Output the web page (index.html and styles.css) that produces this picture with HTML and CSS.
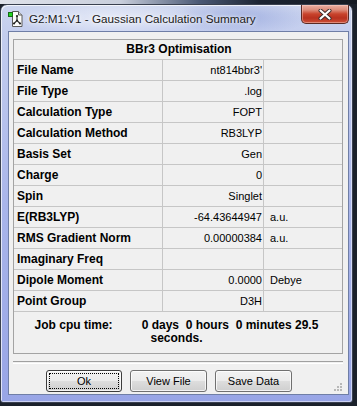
FILE: index.html
```html
<!DOCTYPE html>
<html>
<head>
<meta charset="utf-8">
<link rel="stylesheet" href="styles.css">
</head>
<body>
<div class="desktop">
  <div class="window">
    <div class="titlebar">
      <svg class="app-icon" width="16" height="16" viewBox="0 0 16 16">
        <path d="M4.5 0.5h6l3.5 3.5v11.5h-9.5z" fill="#fdfdfd" stroke="#5a5a5a"/>
        <path d="M10.5 0.5v3.5h3.5" fill="#d8d8d8" stroke="#5a5a5a"/>
        <path d="M9 5v4.5M9 9.5l-3 3M9 9.5l3 3" stroke="#333" stroke-width="1.2" fill="none"/>
        <circle cx="9" cy="5" r="1.1" fill="#222"/>
        <circle cx="9" cy="9.5" r="1.1" fill="#222"/>
        <circle cx="6" cy="12.5" r="1.1" fill="#222"/>
        <circle cx="12" cy="12.5" r="1.1" fill="#222"/>
        <rect x="0.5" y="1.5" width="4" height="4" fill="#22d622" stroke="#176b17"/>
      </svg>
      <span class="title">G2:M1:V1 - Gaussian Calculation Summary</span>
      <div class="close">
        <svg width="14" height="11" viewBox="0 0 14 11">
          <path d="M2.5 1.5l9 8M11.5 1.5l-9 8" stroke="#3b2a2a" stroke-width="4" stroke-linecap="round"/>
          <path d="M2.5 1.5l9 8M11.5 1.5l-9 8" stroke="#ffffff" stroke-width="2.2" stroke-linecap="round"/>
        </svg>
      </div>
    </div>
    <div class="client">
      <div class="panel">
        <div class="grid">
          <div class="cell head">BBr3 Optimisation</div>

          <div class="cell lbl">File Name</div><div class="cell val">nt814bbr3'</div><div class="cell unit"></div>
          <div class="cell lbl">File Type</div><div class="cell val">.log</div><div class="cell unit"></div>
          <div class="cell lbl">Calculation Type</div><div class="cell val">FOPT</div><div class="cell unit"></div>
          <div class="cell lbl">Calculation Method</div><div class="cell val">RB3LYP</div><div class="cell unit"></div>
          <div class="cell lbl">Basis Set</div><div class="cell val">Gen</div><div class="cell unit"></div>
          <div class="cell lbl">Charge</div><div class="cell val">0</div><div class="cell unit"></div>
          <div class="cell lbl">Spin</div><div class="cell val">Singlet</div><div class="cell unit"></div>
          <div class="cell lbl">E(RB3LYP)</div><div class="cell val">-64.43644947</div><div class="cell unit">a.u.</div>
          <div class="cell lbl">RMS Gradient Norm</div><div class="cell val">0.00000384</div><div class="cell unit">a.u.</div>
          <div class="cell lbl">Imaginary Freq</div><div class="cell val"></div><div class="cell unit"></div>
          <div class="cell lbl">Dipole Moment</div><div class="cell val">0.0000</div><div class="cell unit">Debye</div>
          <div class="cell lbl">Point Group</div><div class="cell val">D3H</div><div class="cell unit"></div>
        </div>
        <div class="cpu">
          <div class="cpu-line"><span class="cpu-label">Job cpu time:</span><span>0 days&nbsp; 0 hours&nbsp; 0 minutes 29.5</span></div>
          <div class="cpu-line">seconds.</div>
        </div>
      </div>
      <div class="sep"></div>
      <div class="buttons">
        <button class="btn default"><span class="focus">Ok</span></button>
        <button class="btn">View File</button>
        <button class="btn">Save Data</button>
        <svg class="grip" width="10" height="10" viewBox="0 0 10 10">
          <g fill="#b8b8b8">
            <rect x="7" y="1" width="2" height="2"/>
            <rect x="4" y="4" width="2" height="2"/><rect x="7" y="4" width="2" height="2"/>
            <rect x="1" y="7" width="2" height="2"/><rect x="4" y="7" width="2" height="2"/><rect x="7" y="7" width="2" height="2"/>
          </g>
        </svg>
      </div>
    </div>
  </div>
</div>
</body>
</html>
```
FILE: styles.css
```css
html, body {
  margin: 0;
  padding: 0;
}
body {
  width: 357px;
  height: 406px;
  overflow: hidden;
  background: #1b212b;
}
.desktop {
  width: 357px;
  height: 406px;
  padding-top: 4px;
  box-sizing: border-box;
  background:
    linear-gradient(90deg, #dfe2ea 0px, #c9cfdc 120px, #4a5874 200px, #1c2432 260px, #151a22 357px);
  background-size: 357px 4px;
  background-repeat: no-repeat;
}
.window {
  width: 353px;
  height: 399px;
  box-sizing: border-box;
  border: 1px solid #3a4150;
  border-radius: 7px 7px 3px 3px;
  padding: 0 3px 7px 7px;
  display: flex;
  flex-direction: column;
  background:
    radial-gradient(ellipse 90px 20px at 110px 14px, rgba(255,255,255,0.55), rgba(255,255,255,0) 100%),
    radial-gradient(ellipse 70px 18px at 240px 12px, rgba(120,140,210,0.45), rgba(120,140,210,0) 100%),
    linear-gradient(180deg, #cdd6ef 0px, #c3cdee 30px, #a9b5ea 200px, #98a5e6 399px);
  box-shadow: inset 1px 1px 0 rgba(255,255,255,0.7), inset -1px -1px 0 rgba(255,255,255,0.5);
}
.titlebar {
  height: 26px;
  flex: none;
  display: flex;
  align-items: flex-start;
}
.app-icon {
  margin-top: 6px;
  flex: none;
}
.title {
  margin-left: 5px;
  margin-top: 6px;
  font-family: "Liberation Sans", Arial, sans-serif;
  font-size: 11.7px;
  line-height: 15px;
  color: #1a1a1a;
  text-shadow: 0 0 6px rgba(255,255,255,0.95), 0 0 3px rgba(255,255,255,0.9);
  white-space: nowrap;
}
.close {
  margin-left: auto;
  width: 48px;
  height: 19px;
  box-sizing: border-box;
  border: 1px solid #5a2a24;
  border-top: none;
  border-radius: 0 0 5px 5px;
  background: linear-gradient(180deg, #eab0a4 0px, #dc8a78 5px, #c8432c 9px, #b8311f 13px, #c94a34 17px, #d8715c 19px);
  box-shadow: inset 0 0 0 1px rgba(255,220,210,0.4);
  display: flex;
  align-items: center;
  justify-content: center;
}
.client {
  flex: 1;
  background: #f0f0f0;
  border: 1px solid #6f7ea6;
  display: flex;
  flex-direction: column;
}
.panel {
  margin: 7px 0 0 4px;
  width: 330px;
  height: 315px;
  box-sizing: border-box;
  border: 1px solid #a3a3a3;
  display: flex;
  flex-direction: column;
}
.grid {
  display: grid;
  grid-template-columns: 149px 101px 1fr;
  grid-template-rows: 20px;
  grid-auto-rows: 21px;
  font-family: "Liberation Sans", Arial, sans-serif;
  color: #000;
}
.cell {
  box-sizing: border-box;
  border-bottom: 1px solid #c6c6c6;
  line-height: 20px;
  white-space: nowrap;
  overflow: hidden;
}
.head {
  grid-column: 1 / 4;
  grid-row: 1;
  line-height: 19px;
  text-align: center;
  font-weight: bold;
  font-size: 12px;
  padding-left: 2px;
}
.lbl {
  border-right: 1px solid #c6c6c6;
  font-weight: bold;
  font-size: 12px;
  padding-left: 3px;
}
.val {
  border-right: 1px solid #c6c6c6;
  font-size: 11px;
  text-align: right;
  padding-right: 1px;
}
.unit {
  font-size: 11px;
  padding-left: 6px;
}
.cpu {
  flex: 1;
  padding-top: 7px;
  padding-right: 3px;
  font-family: "Liberation Sans", Arial, sans-serif;
  font-weight: bold;
  font-size: 12px;
  line-height: 13px;
  text-align: center;
  color: #000;
}
.cpu-label {
  margin-right: 29px;
}
.sep {
  margin: 7px 0 0 4px;
  width: 330px;
  height: 1px;
  border-top: 1px solid #a0a0a0;
  border-bottom: 1px solid #ffffff;
}
.buttons {
  display: flex;
  align-items: flex-start;
  padding: 6px 0 0 37px;
  gap: 8px;
}
.btn {
  width: 77px;
  height: 22px;
  margin: 0;
  padding: 0;
  box-sizing: border-box;
  border: 1px solid #707070;
  border-radius: 3px;
  background: linear-gradient(180deg, #f2f2f2 0%, #ebebeb 48%, #dddddd 52%, #cfcfcf 100%);
  box-shadow: inset 0 0 0 1px rgba(255,255,255,0.75);
  font-family: "Liberation Sans", Arial, sans-serif;
  font-size: 11px;
  color: #000;
  display: flex;
  align-items: center;
  justify-content: center;
}
.btn.default {
  width: 76px;
  border-color: #3c3c3c;
  padding: 2px;
}
.focus {
  flex: 1;
  align-self: stretch;
  border: 1px dotted #000;
  display: flex;
  align-items: center;
  justify-content: center;
}
.grip {
  margin-left: auto;
  margin-right: 5px;
  margin-top: 12px;
}
```
